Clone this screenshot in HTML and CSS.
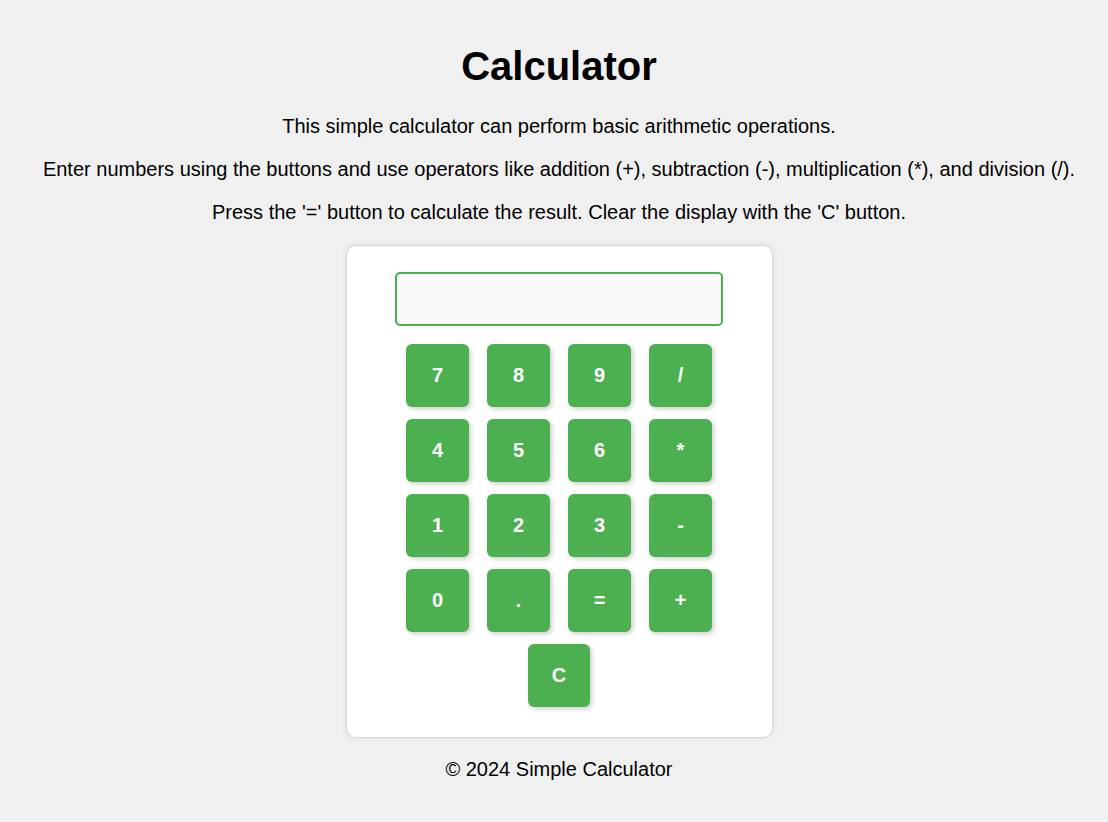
FILE: index.html
```html
<!DOCTYPE html>
<html lang="en">
<head>
<meta charset="utf-8">
<title>Calculator</title>
<link rel="stylesheet" href="styles.css">
</head>
<body>
  <header class="intro">
    <h1 class="title">Calculator</h1>
    <p class="text">This simple calculator can perform basic arithmetic operations.</p>
    <p class="text">Enter numbers using the buttons and use operators like addition (+), subtraction (-), multiplication (*), and division (/).</p>
    <p class="text">Press the '=' button to calculate the result. Clear the display with the 'C' button.</p>
  </header>
  <main class="calc">
    <input class="display" type="text" readonly>
    <div class="keys">
      <button class="key">7</button>
      <button class="key">8</button>
      <button class="key">9</button>
      <button class="key">/</button>
      <button class="key">4</button>
      <button class="key">5</button>
      <button class="key">6</button>
      <button class="key">*</button>
      <button class="key">1</button>
      <button class="key">2</button>
      <button class="key">3</button>
      <button class="key">-</button>
      <button class="key">0</button>
      <button class="key">.</button>
      <button class="key">=</button>
      <button class="key">+</button>
    </div>
    <button class="key key-clear">C</button>
  </main>
  <footer class="footer">© 2024 Simple Calculator</footer>
</body>
</html>
```
FILE: styles.css
```css
* { box-sizing: border-box; }
body {
  margin: 0;
  padding-left: 10px;
  background: #f0f0f0;
  font-family: "Liberation Sans", Arial, sans-serif;
  color: #000;
  display: flex;
  flex-direction: column;
  align-items: center;
}
.intro {
  display: flex;
  flex-direction: column;
  align-items: center;
  text-align: center;
}
.title {
  margin: 43px 0 26px;
  font-size: 40px;
  line-height: 46px;
  font-weight: bold;
}
.text {
  margin: 0 0 20px;
  font-size: 20px;
  line-height: 23px;
}
.calc {
  margin-top: 1px;
  width: 427px;
  background: #fff;
  border: 1px solid #d6d6d6;
  border-radius: 10px;
  box-shadow: 0 0 6px rgba(0, 0, 0, 0.08);
  padding: 26px 0 30px;
  display: flex;
  flex-direction: column;
  align-items: center;
}
.display {
  width: 328px;
  height: 54px;
  border: 2px solid #4caf50;
  border-radius: 5px;
  background: #f9f9f9;
  font-family: inherit;
  font-size: 24px;
  text-align: right;
  padding: 0 10px;
  outline: none;
}
.keys {
  margin-top: 18px;
  display: grid;
  grid-template-columns: repeat(4, 62.5px);
  grid-auto-rows: 63px;
  column-gap: 18.5px;
  row-gap: 12px;
}
.key {
  width: 62.5px;
  height: 63px;
  border: none;
  border-radius: 6px;
  background: #4caf50;
  color: #fff;
  font-family: inherit;
  font-size: 20px;
  font-weight: bold;
  box-shadow: 2px 2px 5px rgba(0, 0, 0, 0.2);
  cursor: pointer;
  padding: 0;
}
.key-clear {
  margin-top: 12px;
}
.footer {
  margin-top: 20px;
  font-size: 20px;
  line-height: 23px;
}
```
